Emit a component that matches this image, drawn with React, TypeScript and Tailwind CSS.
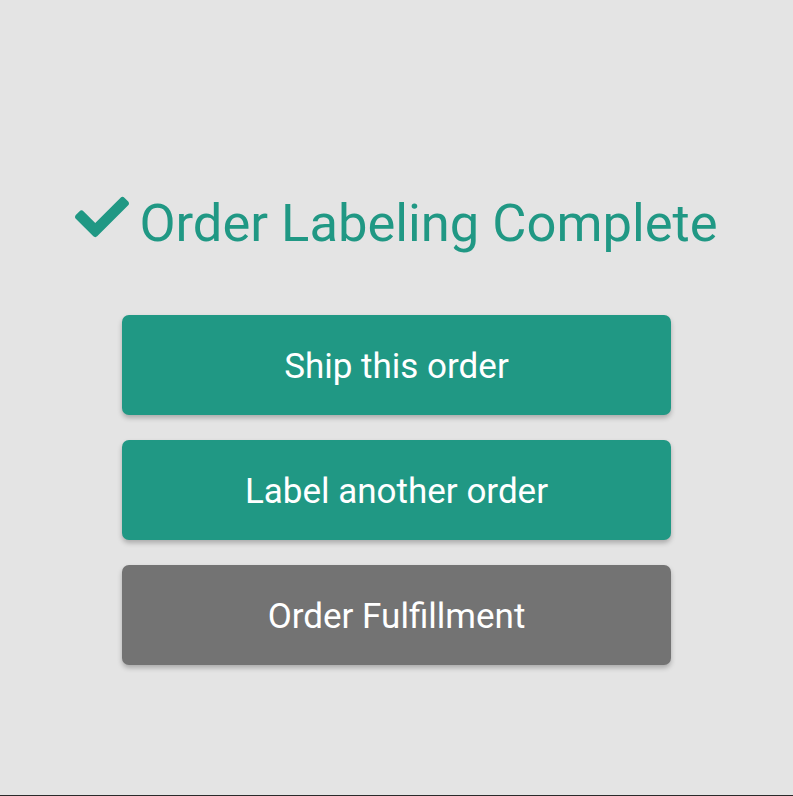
import { FaCheck } from "react-icons/fa";

const buttons = [
  { label: "Ship this order", tone: "bg-[#209884]" },
  { label: "Label another order", tone: "bg-[#209884]" },
  { label: "Order Fulfillment", tone: "bg-[#737373]" },
];

export default function App() {
  return (
    <div className="h-[796px] bg-[#e4e4e4] border-b border-[#2a2a2a] flex flex-col items-center pt-[191px] font-['Roboto',sans-serif]">
      {/* Heading */}
      <h1 className="flex items-center gap-[10px] text-[#209884] text-[52.5px] leading-[64px] font-normal">
        <FaCheck className="w-[54px] h-[54px] -mt-[12px]" />
        Order Labeling Complete
      </h1>

      {/* Actions */}
      <div className="mt-[60px] flex flex-col gap-[25px]">
        {buttons.map((b) => (
          <button
            key={b.label}
            className={`w-[549px] h-[100px] pt-[4px] rounded-[7px] ${b.tone} text-white text-[35px] shadow-[0_3px_5px_rgba(0,0,0,0.25)]`}
          >
            {b.label}
          </button>
        ))}
      </div>
    </div>
  );
}
